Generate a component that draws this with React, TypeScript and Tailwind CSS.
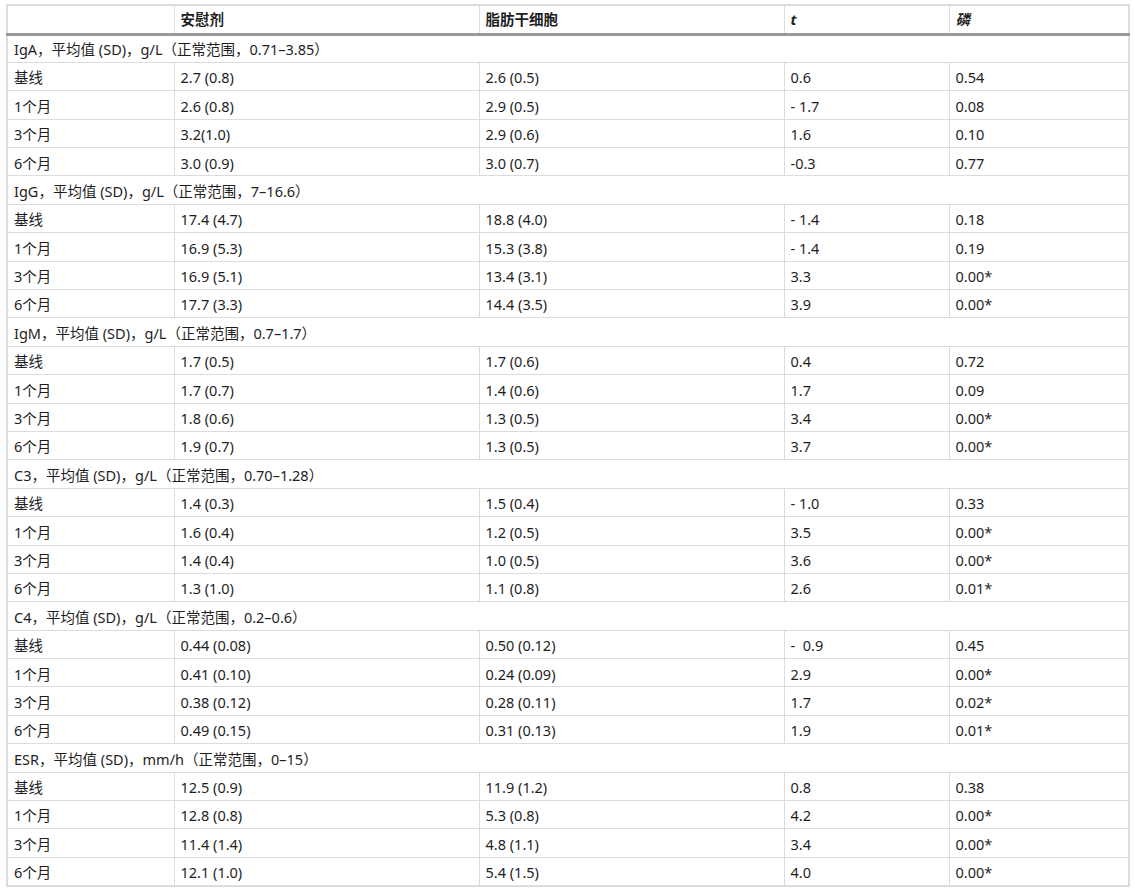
const groups: { title: string; rows: string[][] }[] = [
  {
    title: "IgA，平均值 (SD)，g/L（正常范围，0.71–3.85）",
    rows: [
      ["基线", "2.7 (0.8)", "2.6 (0.5)", "0.6", "0.54"],
      ["1个月", "2.6 (0.8)", "2.9 (0.5)", "- 1.7", "0.08"],
      ["3个月", "3.2(1.0)", "2.9 (0.6)", "1.6", "0.10"],
      ["6个月", "3.0 (0.9)", "3.0 (0.7)", "-0.3", "0.77"],
    ],
  },
  {
    title: "IgG，平均值 (SD)，g/L（正常范围，7–16.6）",
    rows: [
      ["基线", "17.4 (4.7)", "18.8 (4.0)", "- 1.4", "0.18"],
      ["1个月", "16.9 (5.3)", "15.3 (3.8)", "- 1.4", "0.19"],
      ["3个月", "16.9 (5.1)", "13.4 (3.1)", "3.3", "0.00*"],
      ["6个月", "17.7 (3.3)", "14.4 (3.5)", "3.9", "0.00*"],
    ],
  },
  {
    title: "IgM，平均值 (SD)，g/L（正常范围，0.7–1.7）",
    rows: [
      ["基线", "1.7 (0.5)", "1.7 (0.6)", "0.4", "0.72"],
      ["1个月", "1.7 (0.7)", "1.4 (0.6)", "1.7", "0.09"],
      ["3个月", "1.8 (0.6)", "1.3 (0.5)", "3.4", "0.00*"],
      ["6个月", "1.9 (0.7)", "1.3 (0.5)", "3.7", "0.00*"],
    ],
  },
  {
    title: "C3，平均值 (SD)，g/L（正常范围，0.70–1.28）",
    rows: [
      ["基线", "1.4 (0.3)", "1.5 (0.4)", "- 1.0", "0.33"],
      ["1个月", "1.6 (0.4)", "1.2 (0.5)", "3.5", "0.00*"],
      ["3个月", "1.4 (0.4)", "1.0 (0.5)", "3.6", "0.00*"],
      ["6个月", "1.3 (1.0)", "1.1 (0.8)", "2.6", "0.01*"],
    ],
  },
  {
    title: "C4，平均值 (SD)，g/L（正常范围，0.2–0.6）",
    rows: [
      ["基线", "0.44 (0.08)", "0.50 (0.12)", "-  0.9", "0.45"],
      ["1个月", "0.41 (0.10)", "0.24 (0.09)", "2.9", "0.00*"],
      ["3个月", "0.38 (0.12)", "0.28 (0.11)", "1.7", "0.02*"],
      ["6个月", "0.49 (0.15)", "0.31 (0.13)", "1.9", "0.01*"],
    ],
  },
  {
    title: "ESR，平均值 (SD)，mm/h（正常范围，0–15）",
    rows: [
      ["基线", "12.5 (0.9)", "11.9 (1.2)", "0.8", "0.38"],
      ["1个月", "12.8 (0.8)", "5.3 (0.8)", "4.2", "0.00*"],
      ["3个月", "11.4 (1.4)", "4.8 (1.1)", "3.4", "0.00*"],
      ["6个月", "12.1 (1.0)", "5.4 (1.5)", "4.0", "0.00*"],
    ],
  },
];

const head = "border border-[#dcdcdc] p-0 pl-[6px] h-[29px] align-middle text-left font-bold whitespace-pre";
const cell = "border border-[#dcdcdc] p-0 pl-[6px] pt-[2px] h-[28.4px] align-middle whitespace-pre";

export default function App() {
  return (
    <div
      className="min-h-screen bg-white pt-[4px] pl-[6px] text-[14.5px] text-[#1e1e1e]"
      style={{ fontFamily: '"Noto Sans", "Noto Sans CJK SC", sans-serif' }}
    >
      <table className="w-[1122px] table-fixed border-collapse border-2 border-[#dcdcdc] leading-none">
        <colgroup>
          <col className="w-[167px]" />
          <col className="w-[305px]" />
          <col className="w-[305px]" />
          <col className="w-[165px]" />
          <col className="w-[180px]" />
        </colgroup>
        <thead>
          <tr className="border-b-[3px] border-b-[#999]">
            <th className={head}></th>
            <th className={head}>安慰剂</th>
            <th className={head}>脂肪干细胞</th>
            <th className={`${head} italic`}>t</th>
            <th className={`${head} italic`}>磷</th>
          </tr>
        </thead>
        <tbody>
          {groups.map((g) => (
            <>
              <tr key={g.title}>
                <td colSpan={5} className={cell}>
                  {g.title}
                </td>
              </tr>
              {g.rows.map((r) => (
                <tr key={g.title + r[0]}>
                  {r.map((v, i) => (
                    <td key={i} className={cell}>
                      {v}
                    </td>
                  ))}
                </tr>
              ))}
            </>
          ))}
        </tbody>
      </table>
    </div>
  );
}
